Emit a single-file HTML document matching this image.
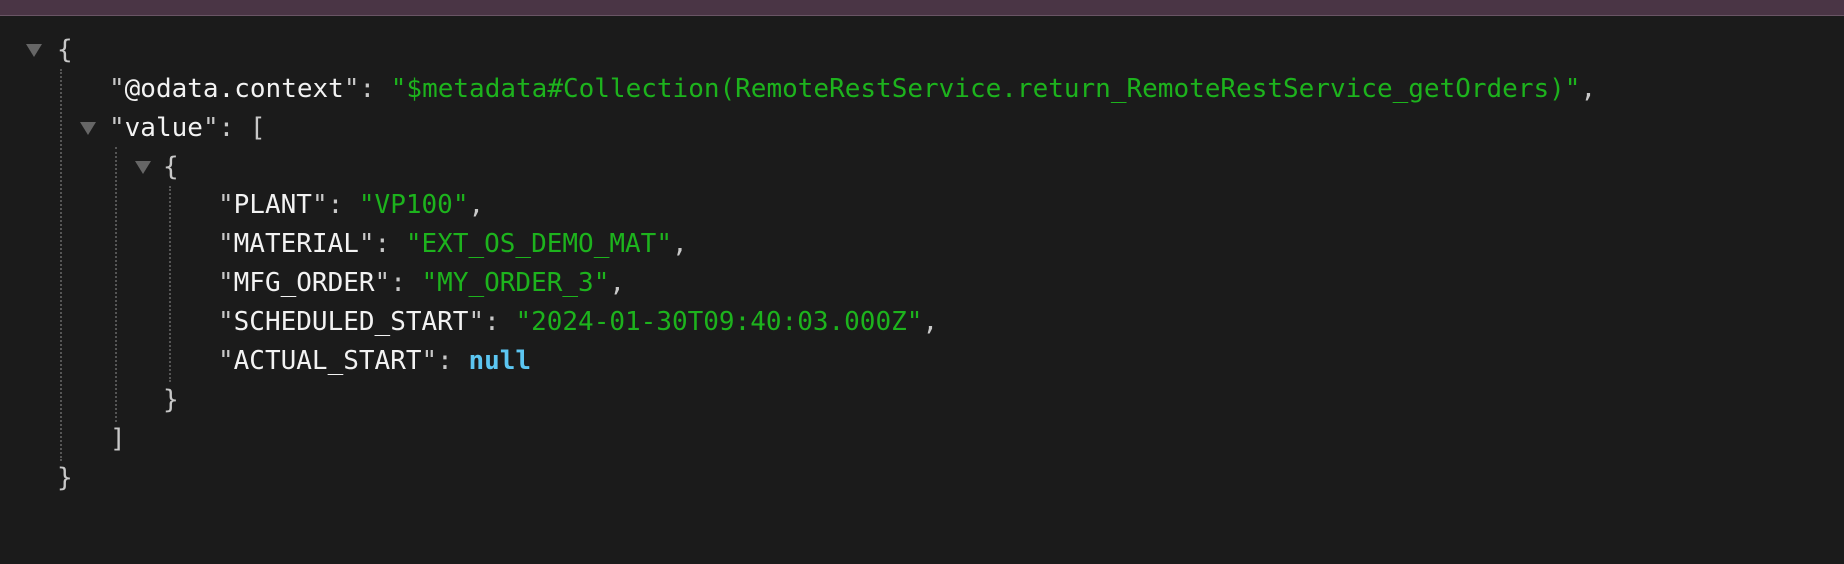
<!DOCTYPE html><html><head><style>
body{margin:0;width:1844px;height:564px;background:#1b1b1b;overflow:hidden;font-family:"DejaVu Sans Mono","Liberation Mono",monospace;font-size:26px;}
.bar{position:absolute;left:0;top:0;width:1844px;height:15px;background:#4a3545;border-bottom:1px solid #6a5565}
.l{position:absolute;height:39px;line-height:39px;white-space:pre;color:#c8c8c8}
.k{color:#f2f2f2}.s{color:#1db31d}.n{color:#5cc6f2;font-weight:bold}
.t{position:absolute;width:0;height:0;border-left:8px solid transparent;border-right:8px solid transparent;border-top:13px solid #666}
.d{position:absolute;width:0;border-left:2px dotted #555}
</style></head><body>
<div class="bar"></div>
<div class="t" style="left:26px;top:44px"></div>
<div class="t" style="left:80px;top:122px"></div>
<div class="t" style="left:135px;top:161px"></div>
<div class="d" style="left:60px;top:69px;height:392px"></div>
<div class="d" style="left:115px;top:147px;height:275px"></div>
<div class="d" style="left:169px;top:186px;height:196px"></div>
<div class="l" style="left:57px;top:31px">{</div>
<div class="l" style="left:109px;top:70px">"<span class="k">@odata.context</span>": <span class="s">"$metadata#Collection(RemoteRestService.return_RemoteRestService_getOrders)"</span>,</div>
<div class="l" style="left:109px;top:109px">"<span class="k">value</span>": [</div>
<div class="l" style="left:163px;top:148px">{</div>
<div class="l" style="left:218px;top:186px">"<span class="k">PLANT</span>": <span class="s">"VP100"</span>,</div>
<div class="l" style="left:218px;top:225px">"<span class="k">MATERIAL</span>": <span class="s">"EXT_OS_DEMO_MAT"</span>,</div>
<div class="l" style="left:218px;top:264px">"<span class="k">MFG_ORDER</span>": <span class="s">"MY_ORDER_3"</span>,</div>
<div class="l" style="left:218px;top:303px">"<span class="k">SCHEDULED_START</span>": <span class="s">"2024-01-30T09:40:03.000Z"</span>,</div>
<div class="l" style="left:218px;top:342px">"<span class="k">ACTUAL_START</span>": <span class="n">null</span></div>
<div class="l" style="left:163px;top:381px">}</div>
<div class="l" style="left:110px;top:420px">]</div>
<div class="l" style="left:57px;top:459px">}</div>
</body></html>
